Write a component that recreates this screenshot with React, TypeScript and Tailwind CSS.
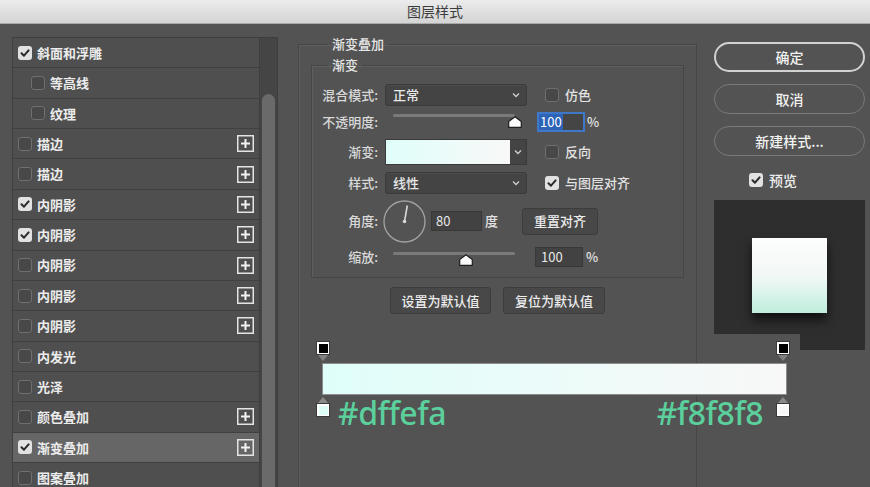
import React from 'react';

const LAYERS: { name: string; on?: boolean; indent?: boolean; plus?: boolean; active?: boolean }[] = [
  { name: '斜面和浮雕', on: true },
  { name: '等高线', indent: true },
  { name: '纹理', indent: true },
  { name: '描边', plus: true },
  { name: '描边', plus: true },
  { name: '内阴影', on: true, plus: true },
  { name: '内阴影', on: true, plus: true },
  { name: '内阴影', plus: true },
  { name: '内阴影', plus: true },
  { name: '内阴影', plus: true },
  { name: '内发光' },
  { name: '光泽' },
  { name: '颜色叠加', plus: true },
  { name: '渐变叠加', on: true, plus: true, active: true },
  { name: '图案叠加' },
];

function Check({ on }: { on?: boolean }) {
  if (on) {
    return (
      <span className="w-[14px] h-[14px] shrink-0 rounded-[3px] bg-[#e2e2e2] flex items-center justify-center">
        <svg width="10" height="10" viewBox="0 0 10 10">
          <path d="M1.5 5.2 L4 7.7 L8.6 2.4" stroke="#2a2a2a" strokeWidth="2" fill="none" strokeLinecap="round" strokeLinejoin="round" />
        </svg>
      </span>
    );
  }
  return <span className="w-[14px] h-[14px] shrink-0 rounded-[3px] bg-[#484848] border border-[#6f6f6f]" />;
}

function PlusBox() {
  return (
    <svg width="17" height="17" viewBox="0 0 17 17">
      <rect x="0.75" y="0.75" width="15.5" height="15.5" fill="none" stroke="#e4e4e4" strokeWidth="1.5" />
      <path d="M8.5 4 V13 M4 8.5 H13" stroke="#f2f2f2" strokeWidth="2" />
    </svg>
  );
}

function Chevron() {
  return (
    <svg width="8" height="6" viewBox="0 0 8 6">
      <path d="M1 1.5 L4 4.5 L7 1.5" stroke="#cfcfcf" strokeWidth="1.3" fill="none" />
    </svg>
  );
}

function Thumb() {
  return (
    <svg width="14" height="12" viewBox="0 0 14 12">
      <path d="M7 0.7 L13.3 5.6 V11.3 H0.7 V5.6 Z" fill="#fafafa" stroke="#1e1e1e" strokeWidth="1.2" />
    </svg>
  );
}

function Slider({ pos, trackTop }: { pos: number; trackTop: number }) {
  return (
    <div className="relative w-[142px] h-[20px]">
      <div className="absolute left-[8px] w-[122px] h-[3px] bg-[#7a7a7a] rounded-full" style={{ top: trackTop }} />
      <div className="absolute" style={{ left: pos - 7, top: trackTop + 2 }}>
        <Thumb />
      </div>
    </div>
  );
}

function Select({ value }: { value: string }) {
  return (
    <div className="w-[142px] h-[22px] rounded-[3px] bg-[#444444] border border-[#3a3a3a] shadow-[inset_0_1px_0_#4c4c4c] flex items-center justify-between pl-[7px] pr-[6px]">
      <span className="text-[13px] text-[#e8e8e8] font-medium">{value}</span>
      <Chevron />
    </div>
  );
}

function Label({ children }: { children: React.ReactNode }) {
  return <span className="w-[66px] shrink-0 text-right text-[13px] text-[#d8d8d8] font-medium">{children}</span>;
}

function CheckLabel({ on, text }: { on?: boolean; text: string }) {
  return (
    <div className="flex items-center gap-[6px] ml-[11px]">
      <Check on={on} />
      <span className="text-[13px] text-[#e2e2e2] font-medium">{text}</span>
    </div>
  );
}

function Stop({ fill, up }: { fill: string; up?: boolean }) {
  const tri = up ? (
    <div className="w-0 h-0 border-l-[5px] border-r-[5px] border-b-[6px] border-l-transparent border-r-transparent border-b-[#8a8a8a]" />
  ) : (
    <div className="w-0 h-0 border-l-[5px] border-r-[5px] border-t-[6px] border-l-transparent border-r-transparent border-t-[#808080]" />
  );
  const sq = (
    <div className="w-[14px] h-[14px] border border-[#3a3a3a] bg-white p-[1.5px]">
      <div className="w-full h-full" style={{ background: fill }} />
    </div>
  );
  return (
    <div className="flex flex-col items-center w-[14px]">
      {up ? tri : sq}
      {up ? sq : tri}
    </div>
  );
}

export default function App() {
  return (
    <div className="w-[870px] h-[487px] overflow-hidden bg-[#535353] relative font-['Noto_Sans_CJK_SC','Noto_Sans',sans-serif]">
      {/* title bar */}
      <div className="h-[24px] bg-gradient-to-b from-[#ececec] to-[#d4d4d4] border-b border-[#a9a9a9] flex items-center justify-center">
        <span className="text-[14px] text-[#3c3c3c]">图层样式</span>
      </div>

      <div className="flex h-[463px]">
        {/* layer list */}
        <div className="pl-[12px] pt-[13px] flex">
          <div className="w-[248px] border-t border-l border-r border-[#3e3e3e]">
            {LAYERS.map((l, i) => (
              <div
                key={i}
                className={`h-[30.36px] border-b border-[#404040] flex items-center justify-between pr-[5px] ${
                  l.indent ? 'pl-[18px]' : 'pl-[5px]'
                } ${l.active ? 'bg-[#666666]' : 'bg-[#4f4f4f]'}`}
              >
                <div className="flex items-center gap-[5px]">
                  <Check on={l.on} />
                  <span className="text-[13px] text-[#ececec] font-bold">{l.name}</span>
                </div>
                {l.plus && <PlusBox />}
              </div>
            ))}
          </div>
          <div className="w-[18px] border-t border-r border-[#3e3e3e] bg-[#454545] flex flex-col">
            <div className="h-[56px]" />
            <div className="flex-1 mx-[2px] rounded-t-full bg-[#6a6a6a]" />
          </div>
        </div>

        {/* settings */}
        <fieldset className="ml-[20px] mt-[11px] w-[399px] h-[480px] border border-[#464646] shadow-[inset_1px_1px_0_#5e5e5e] px-[12px]">
          <legend className="ml-[17px] px-[4px] text-[13px] leading-[18px] text-[#e6e6e6] font-medium">渐变叠加</legend>

          <fieldset className="mt-[3px] border border-[#464646] shadow-[inset_1px_1px_0_#5e5e5e] pb-[10px]">
            <legend className="ml-[16px] px-[4px] text-[13px] leading-[18px] text-[#e6e6e6] font-medium">渐变</legend>

            <div className="mt-[10px] flex items-center h-[22px] gap-[7px]">
              <Label>混合模式:</Label>
              <Select value="正常" />
              <CheckLabel text="仿色" />
            </div>

            <div className="mt-[6px] flex items-center h-[20px] gap-[7px]">
              <Label>不透明度:</Label>
              <Slider pos={130} trackTop={2} />
              <div className="ml-[3px] w-[48px] h-[20px] border-2 border-[#3f78c9] bg-[#454545] flex items-center">
                <span className="bg-[#2e64b8] text-white text-[13px] leading-[16px] px-[1px]">100</span>
              </div>
              <span className="-ml-[5px] text-[13px] text-[#e2e2e2] font-medium">%</span>
            </div>

            <div className="mt-[7px] flex items-center h-[26px] gap-[7px]">
              <Label>渐变:</Label>
              <div className="w-[142px] h-[26px] flex border border-[#3a3a3a] bg-[#444444]">
                <div className="w-[124px] h-full bg-gradient-to-r from-[#dffefa] to-[#f8f8f8]" />
                <div className="flex-1 flex items-center justify-center">
                  <Chevron />
                </div>
              </div>
              <CheckLabel text="反向" />
            </div>

            <div className="mt-[7px] flex items-center h-[22px] gap-[7px]">
              <Label>样式:</Label>
              <Select value="线性" />
              <CheckLabel on text="与图层对齐" />
            </div>

            <div className="mt-[6px] flex items-center h-[42px]">
              <Label>角度:</Label>
              <svg className="ml-[5px]" width="43" height="43" viewBox="0 0 43 43">
                <circle cx="21.5" cy="21.5" r="20.5" fill="none" stroke="#a3a3a3" strokeWidth="1.3" />
                <line x1="21.5" y1="21.5" x2="24.3" y2="5.5" stroke="#d8d8d8" strokeWidth="1.6" />
                <circle cx="21.5" cy="21.5" r="1.8" fill="#d8d8d8" />
              </svg>
              <div className="ml-[5px] w-[51px] h-[20px] bg-[#424242] border border-[#383838] flex items-center pl-[4px]">
                <span className="text-[13px] text-[#e8e8e8]">80</span>
              </div>
              <span className="ml-[3px] text-[13px] text-[#e2e2e2] font-medium">度</span>
              <div className="ml-[24px] w-[76px] h-[27px] rounded-[3px] bg-[#484848] border border-[#3c3c3c] flex items-center justify-center text-[13px] text-[#ececec] font-medium">
                重置对齐
              </div>
            </div>

            <div className="mt-[5px] flex items-center h-[20px] gap-[7px]">
              <Label>缩放:</Label>
              <Slider pos={81} trackTop={5} />
              <div className="ml-[1px] w-[48px] h-[20px] bg-[#424242] border border-[#383838] flex items-center pl-[5px]">
                <span className="text-[13px] text-[#e8e8e8]">100</span>
              </div>
              <span className="-ml-[4px] text-[13px] text-[#e2e2e2] font-medium">%</span>
            </div>
          </fieldset>

          <div className="mt-[9px] flex justify-center gap-[12px]">
            <div className="w-[101px] h-[27px] rounded-[3px] bg-[#484848] border border-[#3c3c3c] flex items-center justify-center text-[13px] text-[#ececec] font-medium">
              设置为默认值
            </div>
            <div className="w-[102px] h-[27px] rounded-[3px] bg-[#484848] border border-[#3c3c3c] flex items-center justify-center text-[13px] text-[#ececec] font-medium">
              复位为默认值
            </div>
          </div>
        </fieldset>

        {/* buttons + preview */}
        <div className="ml-[17px] w-[151px] pt-[18px] flex flex-col">
          <div className="h-[30px] rounded-full border-2 border-[#d2d2d2] flex items-center justify-center text-[14px] text-[#f2f2f2] font-medium">
            确定
          </div>
          <div className="mt-[12px] h-[30px] rounded-full border border-[#7a7a7a] flex items-center justify-center text-[14px] text-[#f2f2f2] font-medium">
            取消
          </div>
          <div className="mt-[12px] h-[30px] rounded-full border border-[#7a7a7a] flex items-center justify-center text-[14px] text-[#f2f2f2] font-medium">
            新建样式...
          </div>
          <div className="mt-[14px] h-[20px] ml-[35px] flex items-center gap-[6px]">
            <Check on />
            <span className="text-[14px] leading-[20px] text-[#ececec] font-medium">预览</span>
          </div>
          <div className="mt-[10px] h-[150px] bg-[#2d2e2d] flex items-center justify-center">
            <div className="w-[75px] h-[75px] bg-gradient-to-b from-[#fdfdfd] via-[#f2f8f6] to-[#bfeedd] shadow-[0_7px_10px_rgba(0,0,0,0.65)]" />
          </div>
        </div>
      </div>

      {/* gradient editor overlay */}
      <div className="absolute left-[714px] top-[334px] w-[86px] h-[17px] bg-[#535353]" />
      <div className="absolute left-[316px] top-[341px] w-[474px]">
        <div className="flex justify-between">
          <Stop fill="#000000" />
          <Stop fill="#000000" />
        </div>
        <div className="mt-[2px] ml-[6px] w-[465px] h-[32px] border border-[#8c8c8c] bg-gradient-to-r from-[#dffefa] to-[#f8f8f8]" />
        <div className="mt-[2px] flex items-start">
          <Stop fill="#dffefa" up />
          <span className="ml-[8px] text-[32px] leading-[32px] text-[#5bcf9c] font-['Noto_Sans',sans-serif] font-medium tracking-[-0.5px]">#dffefa</span>
          <span className="ml-auto mr-[13px] text-[32px] leading-[32px] text-[#5bcf9c] font-['Noto_Sans',sans-serif] font-medium tracking-[-0.5px]">#f8f8f8</span>
          <Stop fill="#f8f8f8" up />
        </div>
      </div>
    </div>
  );
}
